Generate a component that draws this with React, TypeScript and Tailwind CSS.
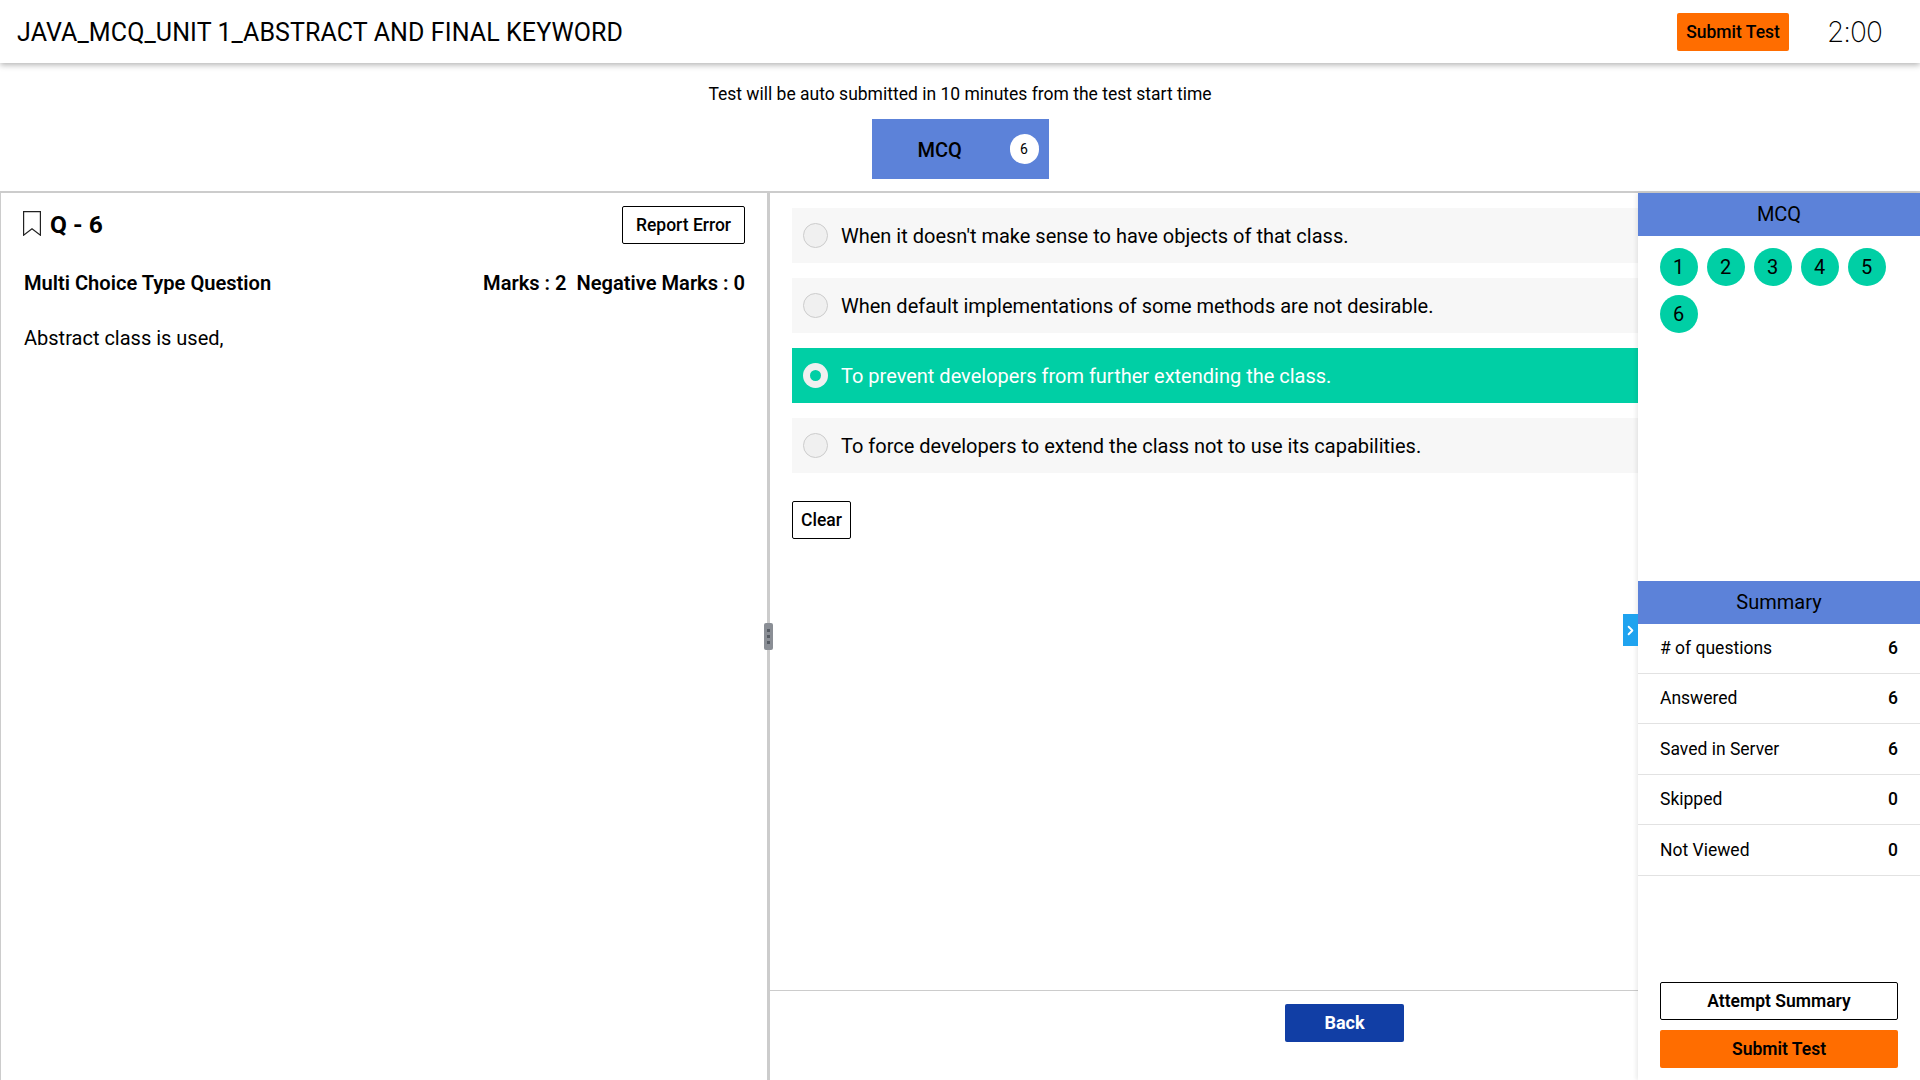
import React from "react";
import { ChevronRight } from "lucide-react";

const options = [
  "When it doesn't make sense to have objects of that class.",
  "When default implementations of some methods are not desirable.",
  "To prevent developers from further extending the class.",
  "To force developers to extend the class not to use its capabilities.",
];

const summary = [
  ["# of questions", "6"],
  ["Answered", "6"],
  ["Saved in Server", "6"],
  ["Skipped", "0"],
  ["Not Viewed", "0"],
];

const App: React.FC = () => {
  return (
    <div className="h-screen w-full flex flex-col overflow-hidden bg-white text-black font-['Roboto',sans-serif]">
      <header className="h-[63px] shrink-0 flex items-center pl-[17px] bg-white shadow-[0_2px_6px_rgba(0,0,0,0.3)] relative z-10">
        <h1 className="text-[25px] font-normal leading-none tracking-[0.1px] pt-[2px]">JAVA_MCQ_UNIT 1_ABSTRACT AND FINAL KEYWORD</h1>
        <button className="ml-auto w-[112px] h-[38px] rounded-[2px] bg-[#ff6d00] text-[17.5px] font-medium pt-[1px]">Submit Test</button>
        <span className="w-[131px] pl-[38px] text-[28px] leading-none font-['Inter',sans-serif] font-extralight tracking-[-1px]">2:00</span>
      </header>

      <div className="h-[128px] shrink-0 flex flex-col items-center pt-[20px]">
        <p className="text-[17.5px] leading-[22px]">Test will be auto submitted in 10 minutes from the test start time</p>
        <div className="mt-[14px] w-[177px] h-[60px] bg-[#5c82d9] flex items-center pl-[46px] pr-[10px]">
          <span className="text-[20px] font-medium pt-[2px]">MCQ</span>
          <span className="ml-auto w-[29px] h-[30px] rounded-full bg-white flex items-center justify-center text-[14px]">6</span>
        </div>
      </div>

      <main className="flex-1 min-h-0 flex border-t-2 border-[#ccc]">
        <section className="w-[770px] shrink-0 border-l border-r-[3px] border-[#ccc] relative pl-[23px] pr-[22px] pt-[13px]">
          <div className="flex items-center justify-between h-[38px]">
            <div className="flex items-center gap-[9px] -ml-[1px]">
              <svg width="18" height="25" viewBox="0 0 18 25" fill="none" stroke="#222" strokeWidth="1.2" className="-mt-[4px]">
                <path d="M0.6 0.6H17.4V24.2L9 17.8L0.6 24.2Z" />
              </svg>
              <span className="text-[24.5px] font-bold">Q - 6</span>
            </div>
            <button className="w-[123px] h-[38px] border border-black rounded-[2px] text-[17.5px] font-medium">Report Error</button>
          </div>
          <div className="flex justify-between mt-[26px] text-[20.1px] font-semibold leading-[26px]">
            <span>Multi Choice Type Question</span>
            <span>Marks : 2&nbsp;&nbsp;Negative Marks : 0</span>
          </div>
          <p className="mt-[29px] text-[20px] leading-[26px]">Abstract class is used,</p>
          <div className="absolute top-[430px] right-[-6px] w-[9px] h-[27px] rounded-[2px] bg-[#8a8e95] flex flex-col items-center justify-center gap-[3px]">
            <span className="w-[3px] h-[3px] bg-[#565b63]" />
            <span className="w-[3px] h-[3px] bg-[#565b63]" />
            <span className="w-[3px] h-[3px] bg-[#565b63]" />
          </div>
        </section>

        <section className="flex-1 min-w-0 flex flex-col">
          <div className="flex-1 pl-[22px] pt-[15px]">
            <div className="flex flex-col gap-[15px]">
              {options.map((text, i) => {
                const selected = i === 2;
                return (
                  <div
                    key={text}
                    className={
                      selected
                        ? "h-[55px] flex items-center pl-[11px] bg-[#00cfa5] text-white"
                        : "h-[55px] flex items-center pl-[11px] bg-[#f7f7f7]"
                    }
                  >
                    <span
                      className={
                        selected
                          ? "w-[25px] h-[25px] rounded-full bg-[#f0f0f0] flex items-center justify-center"
                          : "w-[25px] h-[25px] rounded-full bg-[#f0f0f0] border border-[#ccc]"
                      }
                    >
                      {selected && <span className="w-[11px] h-[11px] rounded-full bg-[#00cfa5]" />}
                    </span>
                    <span className="ml-[13px] text-[20px]">{text}</span>
                  </div>
                );
              })}
            </div>
            <button className="mt-[28px] w-[59px] h-[38px] border border-black rounded-[2px] text-[17.5px] font-medium">Clear</button>
          </div>
          <div className="h-[90px] shrink-0 border-t border-[#ccc] flex pt-[13px] pl-[515px]">
            <button className="w-[119px] h-[38px] rounded-[2px] bg-[#113ea5] text-white text-[18px] font-bold pb-[2px]">Back</button>
          </div>
        </section>

        <aside className="w-[282px] shrink-0 flex flex-col relative shadow-[-2px_0_4px_rgba(0,0,0,0.08)]">
          <div className="h-[43px] bg-[#5c82d9] flex items-center justify-center text-[20px] pb-[1px]">MCQ</div>
          <div className="h-[345px] pl-[21.5px] pt-[12px] flex flex-wrap content-start gap-x-[9px] gap-y-[9px]">
            {[1, 2, 3, 4, 5, 6].map((n) => (
              <span key={n} className="w-[38px] h-[38px] rounded-full bg-[#00cfa5] flex items-center justify-center text-[20px]">
                {n}
              </span>
            ))}
          </div>
          <div className="h-[43px] bg-[#5c82d9] flex items-center justify-center text-[20px] pb-[2px] relative">
            Summary
            <span className="absolute left-[-15px] top-[33px] w-[15px] h-[32px] bg-[#1fa3ef] flex items-center justify-center text-white">
              <ChevronRight size={17} strokeWidth={3} />
            </span>
          </div>
          <div className="flex flex-col -mt-[1px]">
            {summary.map(([label, value]) => (
              <div key={label} className="h-[50.5px] flex items-center justify-between px-[22px] border-b border-[#e2e2e2] text-[17.5px]">
                <span>{label}</span>
                <span className="font-medium">{value}</span>
              </div>
            ))}
          </div>
          <div className="mt-auto px-[22px] pb-[12px] flex flex-col gap-[10px]">
            <button className="h-[38px] border border-black rounded-[2px] text-[17.5px] font-semibold">Attempt Summary</button>
            <button className="h-[38px] rounded-[2px] bg-[#ff6d00] text-[17.5px] font-semibold">Submit Test</button>
          </div>
        </aside>
      </main>
    </div>
  );
};

export default App;
